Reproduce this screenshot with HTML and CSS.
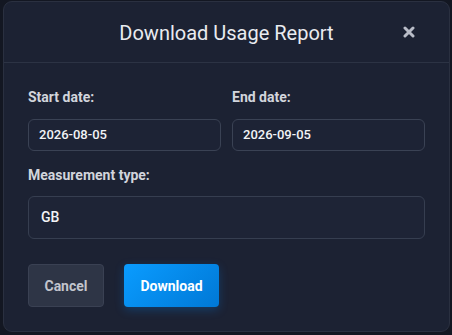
FILE: index.html
```html
<!DOCTYPE html>
<html>
<head>
<meta charset="utf-8">
<link rel="stylesheet" href="styles.css">
</head>
<body>
<div class="modal">
  <div class="header">
    <span></span>
    <h2 class="title">Download Usage Report</h2>
    <button class="close" aria-label="Close">
      <svg width="12" height="12" viewBox="0 0 12 12"><path d="M2 2L10 10M10 2L2 10" stroke="#b9bdc8" stroke-width="3" stroke-linecap="round"/></svg>
    </button>
  </div>
  <div class="body">
    <div class="row">
      <div class="field">
        <label class="label">Start date:</label>
        <div class="input">2026-08-05</div>
      </div>
      <div class="field">
        <label class="label">End date:</label>
        <div class="input">2026-09-05</div>
      </div>
    </div>
    <div class="field">
      <label class="label">Measurement type:</label>
      <div class="select">GB</div>
    </div>
    <div class="actions">
      <button class="btn cancel">Cancel</button>
      <button class="btn download">Download</button>
    </div>
  </div>
</div>
</body>
</html>
```
FILE: styles.css
```css
html, body {
  margin: 0;
  background: #131722;
}
body {
  padding: 1px 2px 0 3px;
  font-family: Roboto, "Liberation Sans", sans-serif;
}
.modal {
  width: 445px;
  height: 329px;
  background: #1c2233;
  border: 1px solid #2a3040;
  border-radius: 9px;
}
.header {
  height: 60px;
  border-bottom: 1px solid #2c3344;
  display: grid;
  grid-template-columns: 1fr auto 1fr;
  align-items: center;
}
.title {
  margin: 0;
  font-size: 20px;
  font-weight: 400;
  color: #e9ebf0;
  padding-top: 2px;
}
.close {
  justify-self: end;
  margin-right: 34px;
  background: none;
  border: 0;
  padding: 0;
  width: 12px;
  height: 12px;
  display: flex;
  margin-top: 0;
}
.body {
  padding: 26px 24px 0 24px;
  display: flex;
  flex-direction: column;
}
.row {
  display: flex;
  gap: 11px;
  margin-bottom: 16px;
}
.row .field { flex: 1; }
.field {
  display: flex;
  flex-direction: column;
}
.label {
  font-size: 14px;
  font-weight: 700;
  color: #d2d5dc;
  line-height: 17px;
  margin-bottom: 13px;
}
.input {
  height: 30px;
  border: 1px solid #3a4254;
  border-radius: 6px;
  background: #1d2335;
  color: #f2f3f6;
  font-size: 13px;
  font-weight: 500;
  line-height: 30px;
  padding-left: 10px;
}
.select {
  height: 41px;
  border: 1px solid #363e50;
  border-radius: 6px;
  background: #1e2436;
  color: #f2f3f6;
  font-size: 14px;
  font-weight: 500;
  line-height: 41px;
  padding-left: 12px;
  margin-top: -1px;
}
.actions {
  display: flex;
  gap: 20px;
  margin-top: 25px;
}
.btn {
  height: 43px;
  border-radius: 4px;
  font-family: Roboto, "Liberation Sans", sans-serif;
  font-size: 14px;
  font-weight: 700;
  padding: 0;
}
.cancel {
  width: 76px;
  background: #2e3546;
  border: 1px solid #3a4153;
  color: #c2c5cd;
}
.download {
  width: 95px;
  border: 0;
  color: #ffffff;
  background: linear-gradient(135deg, #0a9cff, #0078d6);
  box-shadow: 0 3px 10px rgba(0, 140, 255, 0.25);
}
```
